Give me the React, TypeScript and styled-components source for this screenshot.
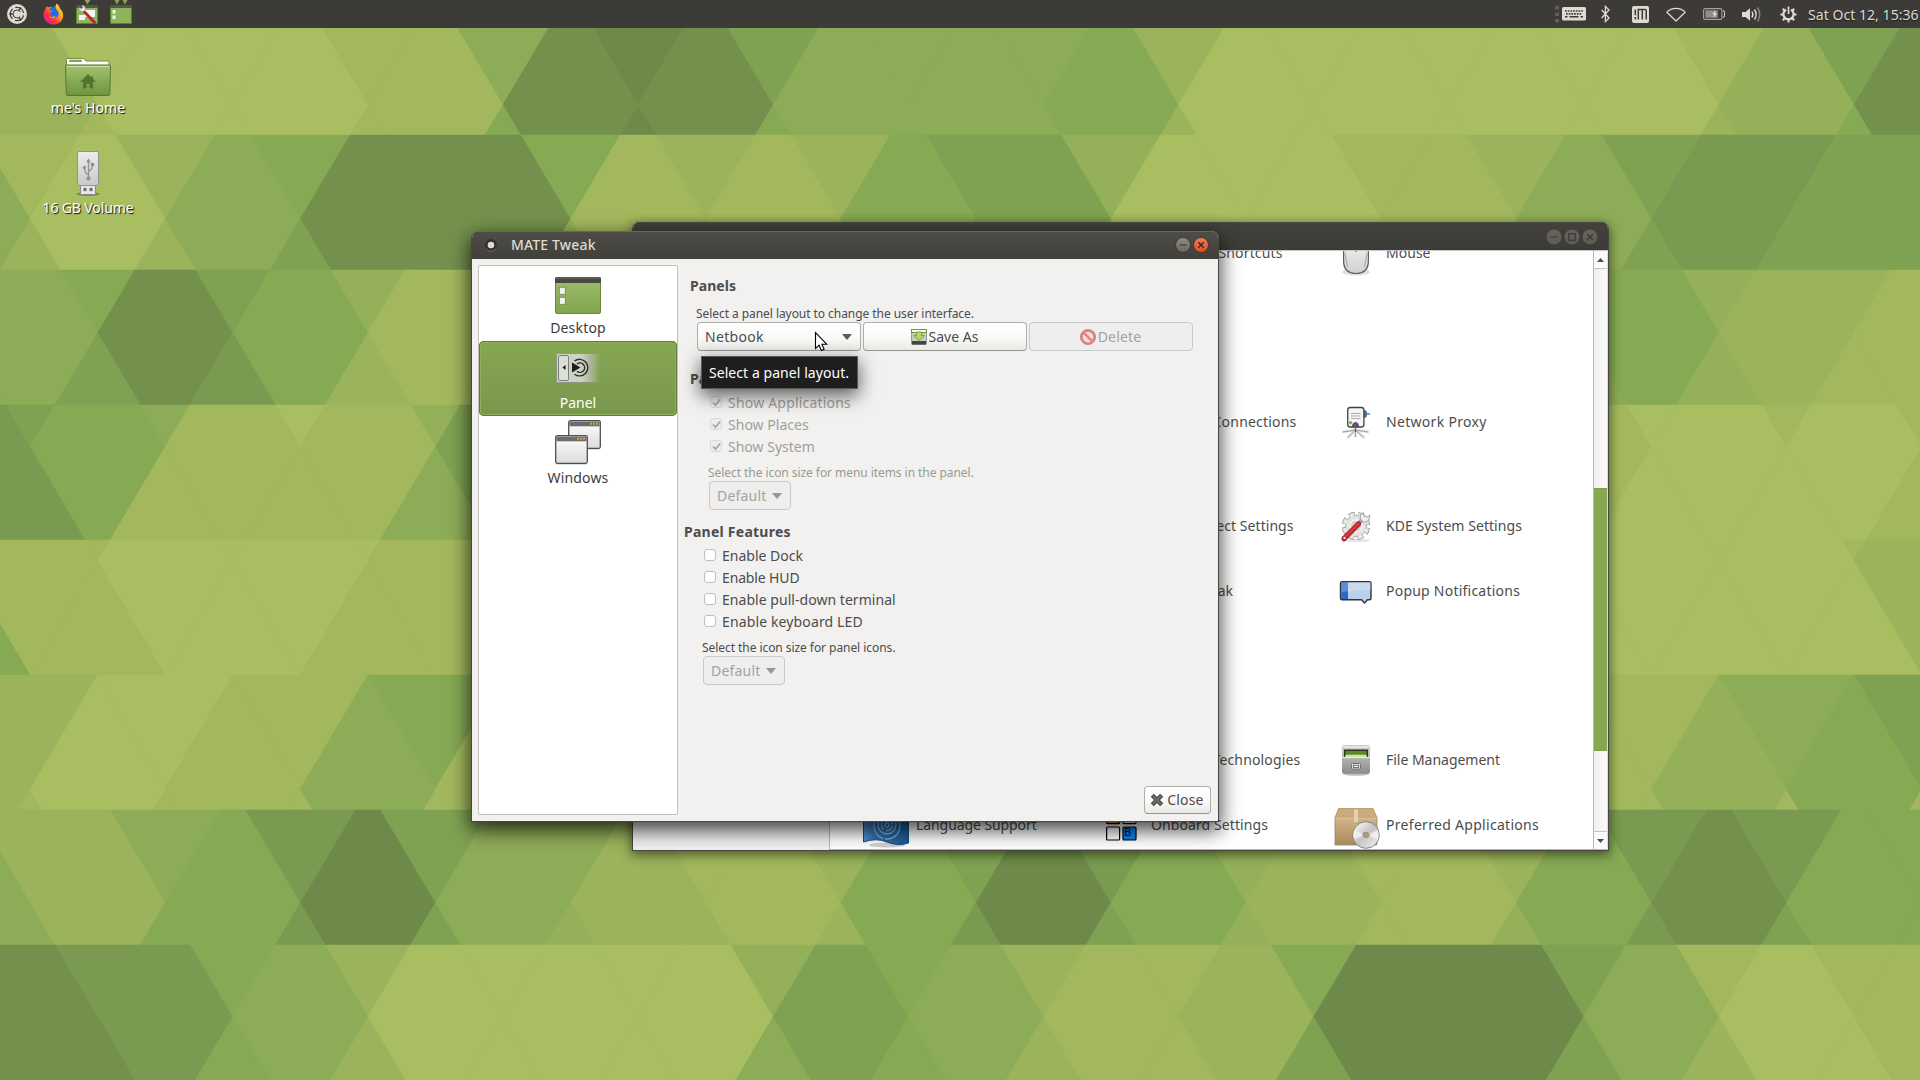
import React from 'react';
import styled, { createGlobalStyle, css } from 'styled-components';

const GlobalStyle = createGlobalStyle`
  * { box-sizing: border-box; }
  html, body { margin: 0; padding: 0; }
  body {
    width: 1920px;
    height: 1080px;
    overflow: hidden;
    background: #a3b75e;
    font-family: "Noto Sans", "Open Sans", sans-serif;
    font-size: 14px;
    line-height: 22px;
    color: #4c4c4c;
  }
  svg { display: block; flex: none; }
`;

/* ---------- wallpaper ---------- */

const PALETTE = [
  '#6d8a4a', '#73914d', '#799a50', '#7fa252', '#86a954',
  '#8dac57', '#94b059', '#9bb35b', '#a3b85d', '#a9be61',
];

/* Each band holds three rows of diamonds, one shade digit per diamond. */
const BANDS: string[][] = [
  ['7998503557999831', '799811554999961', '7898404557999741'],
  ['874147736987323', '5951188439985233', '773167736987333'],
  ['5436888888884678', '514888888888478', '5327888888885688'],
  ['359688888888988', '2488388888888998', '288588888888998'],
  ['8899888888888987', '899888888888997', '4898888888889997'],
  ['6987388888889743', '798488888888853', '7985888888888643'],
  ['752358732687224', '5740578404784144', '542367723686234'],
  ['1247996478403887', '125999358700598', '1147995478303797'],
];
const FIRST_ROW = [-1, 0, 1, 2, 3, 4, 6, 7];
const BAND_H = 135;
const HALF_H = 114;
const HALF_W = 67.55;

const cells: { points: string; color: string }[] = [];
BANDS.forEach((band, b) => {
  const top = b * BAND_H;
  const bottom = top + BAND_H;
  band.forEach((shades, r) => {
    const j = FIRST_ROW[b] + r;
    const cy = 105 + j * HALF_H;
    const x0 = shades.length === 16 ? -37.5 : 30;
    const y0 = Math.max(top, cy - HALF_H);
    const y1 = Math.min(bottom, cy + HALF_H);
    if (y1 <= y0) return;
    const half = (y: number) => ((HALF_H - Math.abs(y - cy)) / HALF_H) * HALF_W;
    const ys = cy > y0 && cy < y1 ? [y0, cy, y1] : [y0, y1];
    shades.split('').forEach((s, i) => {
      const cx = x0 + i * HALF_W * 2;
      const left = ys.map((y) => `${(cx - half(y)).toFixed(1)},${y}`);
      const right = ys.map((y) => `${(cx + half(y)).toFixed(1)},${y}`).reverse();
      cells.push({ points: [...left, ...right].join(' '), color: PALETTE[Number(s)] });
    });
  });
});

const WallpaperSvg = styled.svg`
  position: absolute;
  inset: 0;
`;

const Wallpaper = () => (
  <WallpaperSvg width="1920" height="1080" viewBox="0 0 1920 1080">
    {cells.map((c, i) => (
      <polygon key={i} points={c.points} fill={c.color} stroke={c.color} strokeWidth="0.5" />
    ))}
  </WallpaperSvg>
);

/* ---------- shell ---------- */

const Desktop = styled.main`
  position: relative;
  width: 1920px;
  height: 1080px;
  overflow: hidden;
`;

const TopPanel = styled.header`
  position: relative;
  display: flex;
  align-items: center;
  height: 28px;
  padding-left: 7px;
  background: #3c3b37;
`;

const Slot = styled.div<{ $ml?: number }>`
  flex: none;
  margin-left: ${(p) => p.$ml ?? 0}px;
`;

const Tray = styled.div`
  display: flex;
  align-items: center;
  height: 28px;
  margin-left: auto;
`;

const Clock = styled.time`
  margin-left: 11px;
  width: 112px;
  line-height: 27px;
  letter-spacing: 0.05px;
  white-space: nowrap;
  color: #dfdbd2;
  text-shadow: 0 1px 1px #1c1b19;
`;

const Shortcuts = styled.div`
  position: relative;
  display: flex;
  flex-direction: column;
  gap: 30px;
  width: 176px;
  padding-top: 21px;
`;

const Shortcut = styled.div`
  display: flex;
  flex-direction: column;
  align-items: center;
`;

const ShortcutLabel = styled.span<{ $ls: number }>`
  color: #fff;
  white-space: nowrap;
  letter-spacing: ${(p) => p.$ls}px;
  text-shadow: 1px 1px 1px rgba(0, 0, 0, 0.9);
`;

/* ---------- windows ---------- */

const Window = styled.section<{ $x: number; $y: number; $w: number; $h: number; $active?: boolean }>`
  position: absolute;
  left: ${(p) => p.$x}px;
  top: ${(p) => p.$y}px;
  width: ${(p) => p.$w}px;
  height: ${(p) => p.$h}px;
  display: flex;
  flex-direction: column;
  overflow: hidden;
  border-radius: 7px 7px 0 0;
  border: solid #484743;
  border-width: 0 1px 1px;
  background: #f2f1f0;
  box-shadow: ${(p) =>
    p.$active ? '0 7px 20px 1px rgba(0,0,0,0.75)' : '0 3px 11px 1px rgba(20,30,0,0.6)'};
`;

const TitleBar = styled.div<{ $active?: boolean }>`
  flex: none;
  display: flex;
  align-items: center;
  height: 28px;
  margin: 0 -1px;
  ${(p) =>
    p.$active
      ? css`
          padding: 0 10px 0 13px;
          background: linear-gradient(#4f4d47, #403f3a);
          box-shadow: inset 0 1px 0 #67665f;
          color: #dfdbd2;
        `
      : css`
          padding: 1px 11px 0 13px;
          background: linear-gradient(#42413c, #3c3b37);
          box-shadow: inset 0 1px 0 #4a4944;
          color: #7d7a73;
        `}
`;

const Title = styled.h1`
  flex: 1;
  margin: 0 0 0 13px;
  font-size: 14px;
  font-weight: 500;
  line-height: 28px;
  letter-spacing: 0.15px;
`;

const TitleButtons = styled.div`
  display: flex;
  gap: 2px;
`;

/* ---------- control center ---------- */

const CcBody = styled.div`
  flex: 1;
  min-height: 0;
  display: flex;
  border-right: 1px solid #dcdad7;
`;

const CcSide = styled.div`
  flex: none;
  width: 196px;
  background: #f2f1f0;
`;

const CcList = styled.div`
  flex: 1;
  overflow: hidden;
  background: #fff;
  border-left: 1px solid #b9b7b4;
  border-top: 1px solid #c8c6c3;
  border-bottom: 1px solid #b9b7b4;
`;

const CcScrolled = styled.div`
  margin-top: -31px;
  padding-left: 32px;
`;

const CcGroup = styled.div<{ $gap: number }>`
  display: grid;
  grid-template-columns: repeat(3, 235px);
  grid-auto-rows: 65px;
  margin-bottom: ${(p) => p.$gap}px;
`;

const CcItem = styled.div<{ $col: number }>`
  grid-column: ${(p) => p.$col};
  display: flex;
  align-items: center;
`;

const CcIcon = styled.div`
  flex: none;
  width: 48px;
  height: 48px;
  margin-right: 6px;
`;

const CcLabel = styled.span<{ $ls?: number }>`
  white-space: nowrap;
  letter-spacing: ${(p) => p.$ls ?? 0.1}px;
`;

const Scrollbar = styled.div`
  flex: none;
  display: flex;
  flex-direction: column;
  width: 14px;
  background: linear-gradient(90deg, #efeeed, #fbfafa);
  border-left: 1px solid #b9b7b4;
  border-top: 1px solid #c8c6c3;
  border-bottom: 1px solid #b9b7b4;
`;

const ScrollButton = styled.div<{ $down?: boolean }>`
  flex: none;
  display: flex;
  align-items: center;
  justify-content: center;
  height: 18px;
  background: #fbfafa;
  border: solid #c6c4c1;
  border-width: ${(p) => (p.$down ? '1px 0 0' : '0 0 1px')};
`;

const ScrollTrack = styled.div`
  flex: 1;
  padding-top: 219px;
`;

const ScrollThumb = styled.div`
  height: 263px;
  background: #87a752;
  border: 1px solid #7f9f4c;
  border-width: 1px 0;
`;

/* ---------- tweak window ---------- */

const TweakBody = styled.div`
  flex: 1;
  min-height: 0;
  display: flex;
  padding: 6px 7px 6px 6px;
`;

const CategoryList = styled.nav`
  flex: none;
  width: 200px;
  border: 1px solid #c3c1be;
  border-radius: 2px;
  background: #fff;
`;

const Category = styled.div<{ $selected?: boolean }>`
  display: flex;
  flex-direction: column;
  align-items: center;
  height: 75px;
  padding-top: 3px;
  border-radius: 5px;
  color: #3c3c3c;
  ${(p) =>
    p.$selected &&
    css`
      color: #fff;
      background: linear-gradient(#87a752, #78974e);
      box-shadow: inset 0 0 0 1px #5f7d38, inset 0 0 0 2px #8fb058;
    `}
`;

const CategoryLabel = styled.span<{ $ls: number }>`
  letter-spacing: ${(p) => p.$ls}px;
`;

const Settings = styled.div`
  flex: 1;
  display: flex;
  flex-direction: column;
  padding: 10px 0 0 6px;
`;

const Section = styled.div<{ $indent: number; $mt: number }>`
  margin: ${(p) => p.$mt}px 0 0 ${(p) => p.$indent}px;
`;

const Heading = styled.h2<{ $gap: number; $ls?: number }>`
  margin: 0 0 ${(p) => p.$gap}px;
  font-size: 14px;
  font-weight: 700;
  line-height: 22px;
  letter-spacing: ${(p) => p.$ls ?? 0.04}px;
`;

const Hint = styled.p<{ $indent: number; $mt?: number; $dim?: boolean }>`
  margin: ${(p) => p.$mt ?? 0}px 0 -2px ${(p) => p.$indent}px;
  font-size: 12px;
  line-height: 20px;
  letter-spacing: -0.06px;
  white-space: nowrap;
  color: ${(p) => (p.$dim ? '#979b92' : '#4c4c4c')};
`;

const Row = styled.div<{ $indent: number }>`
  display: flex;
  gap: 2px;
  margin-left: ${(p) => p.$indent}px;
`;

const Button = styled.div<{ $w: number; $h?: number; $dim?: boolean; $align?: string; $gap?: number; $ls?: number }>`
  display: flex;
  align-items: center;
  justify-content: ${(p) => p.$align ?? 'center'};
  gap: ${(p) => p.$gap ?? 2}px;
  width: ${(p) => p.$w}px;
  height: ${(p) => p.$h ?? 29}px;
  padding: 0 8px 0 7px;
  border: 1px solid ${(p) => (p.$dim ? '#c9c9ca' : '#b0aeab')};
  border-bottom-color: ${(p) => (p.$dim ? '#c9c9ca' : '#96948f')};
  border-radius: 4px;
  background: ${(p) => (p.$dim ? '#eeeeef' : 'linear-gradient(#fff, #f9f9f8 55%, #ebeae9)')};
  color: ${(p) => (p.$dim ? '#a5a29e' : '#4c4c4c')};
  letter-spacing: ${(p) => p.$ls ?? 0.15}px;
  white-space: nowrap;
`;

const CheckRow = styled.label<{ $indent: number; $dim?: boolean; $ls: number }>`
  display: flex;
  align-items: center;
  gap: 6px;
  height: 22px;
  margin-left: ${(p) => p.$indent}px;
  letter-spacing: ${(p) => p.$ls}px;
  color: ${(p) => (p.$dim ? '#9f9f9c' : '#4c4c4c')};
`;

const CheckBox = styled.span<{ $dim?: boolean }>`
  display: flex;
  align-items: center;
  justify-content: center;
  width: 12px;
  height: 12px;
  margin-bottom: 2px;
  border: 1px solid ${(p) => (p.$dim ? '#d9d8d7' : '#c0bebb')};
  border-radius: 3px;
  background: ${(p) => (p.$dim ? '#eeedec' : '#fff')};
`;

const Footer = styled.div`
  display: flex;
  justify-content: flex-end;
  margin-top: auto;
  padding-bottom: 1px;
`;

const Tooltip = styled.div`
  position: absolute;
  left: 701px;
  top: 356px;
  width: 157px;
  height: 33px;
  padding-left: 7px;
  border: 1px solid #5a5a50;
  background: #1e1e1e;
  color: #fff;
  line-height: 32px;
  letter-spacing: 0.06px;
  white-space: nowrap;
  box-shadow: 0 6px 18px 1px rgba(0, 0, 0, 0.6);
`;

const Pointer = styled.svg`
  position: absolute;
  left: 814px;
  top: 331px;
`;

/* ---------- icons ---------- */

const MateLogo = () => (
  <svg width="20" height="20" viewBox="0 0 20 20">
    <circle cx="10" cy="10" r="10" fill="#dfdbd2" />
    <g fill="none" stroke="#3c3b37" strokeWidth="1.2">
      <circle cx="10" cy="10" r="6.700" strokeDasharray="11 3.030" strokeDashoffset="-1.500" />
      <circle cx="10" cy="10" r="4" strokeWidth="1" strokeDasharray="20 5.130" strokeDashoffset="-2.500" />
    </g>
    <path d="M2.300 10h3.500M13.800 3.300l-1.700 3M13.800 16.700l-1.700-3" stroke="#3c3b37" strokeWidth="1.500" />
  </svg>
);

const Firefox = () => (
  <svg width="21" height="22" viewBox="0 0 21 22">
    <defs>
      <linearGradient id="fx" x1="0.9" y1="0.1" x2="0.15" y2="0.85">
        <stop offset="0" stopColor="#ffe226" />
        <stop offset="0.4" stopColor="#ff9a1a" />
        <stop offset="0.7" stopColor="#ff3a3c" />
        <stop offset="1" stopColor="#e0208a" />
      </linearGradient>
    </defs>
    <circle cx="10.5" cy="11" r="7.6" fill="#1f6fe0" />
    <path d="M13.6 0.6c2.6 2 3.2 4 3.4 5.2 2.6 2 3.6 5 3 8.2-.8 4.600-4.800 7.500-9.400 7.500C5 21.500.6 17.200.6 12c0-2.600.6-4.500 2-6.400L3.500 3l1.600 1.500c1-.5 2.300-.6 3.400-.3-1.500.8-2.200 2-2.300 3l2.700.5c.4.8-.4 1.600-1.700 2.100.2 3 2.200 5 4.700 4.800 3-.2 4.300-2.600 3.600-5.200-.4-1.500-1.300-2.200-2-3C12.200 4.800 12 2.800 13.600.6z" fill="url(#fx)" />
    <path d="M6.200 12.500c1 1.600 3.200 2 4.500.9.800-.6 1.500-.3 1.500.3-1 1.600-4.800 2-6-1.200z" fill="#ffb02a" />
  </svg>
);

const MiniDesktop = ({ tool }: { tool?: boolean }) => (
  <svg width="22" height="28" viewBox="0 0 22 28">
    {tool ? (
      <path d="M8.500 0h6l-3 4.500z" fill="#87a752" />
    ) : (
      <path d="M4.500 0h5L7 4.500zM12.500 0h5L15 4.500z" fill="#87a752" />
    )}
    <rect x="0.500" y="5.500" width="21" height="18" fill="#8fb35a" stroke="#5f7d38" />
    <rect x="0" y="5" width="22" height="3" fill="#55544f" />
    {tool ? (
      <>
        <rect x="8" y="10" width="11" height="7" fill="#f4f4f2" />
        <rect x="3" y="15" width="6" height="5" fill="#f4f4f2" />
        <path d="M8.500 12l10 10.500" stroke="#b8282c" strokeWidth="3" strokeLinecap="round" />
        <path d="M3 7.200c-.3 3 2 4.800 4.300 4.200l2-2c.4-2-.8-4-3.300-4l.8 2.400-1.500 1.300z" fill="#e8e8e6" stroke="#8a8a88" strokeWidth=".5" />
      </>
    ) : (
      <>
        <rect x="2.500" y="10" width="3" height="3.500" fill="#eef2e6" />
        <rect x="2.500" y="15.500" width="3" height="3.500" fill="#eef2e6" />
      </>
    )}
  </svg>
);

const FG = '#dfdbd2';

const TrayGrip = () => (
  <svg width="4" height="17" viewBox="0 0 4 17" fill="#5e5d58">
    <rect width="4" height="3.500" />
    <rect y="6.500" width="4" height="3.500" />
    <rect y="13" width="4" height="3.500" />
  </svg>
);

const TrayKeyboard = () => (
  <svg width="24" height="14" viewBox="0 0 24 14">
    <rect width="24" height="13.600" rx="1.500" fill={FG} />
    <g stroke="#3c3b37" strokeWidth="1.600">
      <path d="M3 4h18" strokeDasharray="1.700 1" />
      <path d="M4 6.900h16" strokeDasharray="1.700 1" />
      <path d="M3 9.800h2.500M7.500 9.800h9M18.500 9.800H21" />
    </g>
  </svg>
);

const TrayBluetooth = () => (
  <svg width="9" height="18" viewBox="0 0 9 18">
    <path d="M.7 5l7.300 8-3.600 3.600V1.400L8 5 .7 13" fill="none" stroke={FG} strokeWidth="1.300" />
  </svg>
);

const TrayM = () => (
  <svg width="17" height="17" viewBox="0 0 17 17">
    <rect width="17" height="17" rx="2" fill={FG} />
    <path d="M3.300 3.500v5.700M3.300 11v2.500M6.300 13.500V3.500h6.900a1 1 0 0 1 1 1v9M10.300 4v9.500" fill="none" stroke="#3c3b37" strokeWidth="1.500" />
  </svg>
);

const TrayWifi = () => (
  <svg width="20" height="15" viewBox="0 0 20 15">
    <path d="M.9 5.200C5.500.200 14.500.200 19.100 5.200L10 14z" fill="none" stroke={FG} strokeWidth="1.200" strokeLinejoin="round" />
  </svg>
);

const TrayBattery = () => (
  <svg width="22" height="12" viewBox="0 0 22 12">
    <rect x=".6" y=".6" width="18.300" height="10.800" rx="1.500" fill="none" stroke="#a3a099" strokeWidth="1.100" />
    <path d="M20 2.500q1.500 0 1.500 2v3q0 2-1.500 2" fill="none" stroke={FG} strokeWidth="1" />
    <rect x="2.300" y="2.300" width="12.500" height="7.400" fill="#918e87" />
    <path d="M12.500 2L9.500 6.300h2L10.300 10l3.700-4.600h-2.200z" fill="#f2efe8" />
  </svg>
);

const TrayVolume = () => (
  <svg width="20" height="17" viewBox="0 0 20 17" fill="none">
    <path d="M0 6h3.500L8 2.200v12.600L3.500 11H0z" fill={FG} />
    <path d="M10 5.500q1.800 3 0 6M12.500 3.500q3.300 5 0 10" stroke={FG} strokeWidth="1.400" />
    <path d="M15.500 1.500q4.500 7 0 14" stroke="#8a8780" strokeWidth="1.400" />
  </svg>
);

const TrayGear = () => (
  <svg width="17" height="17" viewBox="0 0 17 17" fill="none" stroke={FG}>
    <path d="M6 3.800A5.100 5.100 0 1 0 11 3.800" strokeWidth="2.200" />
    <path d="M8.500 .5v7.500" strokeWidth="1.700" />
    <path d="M8.500 14v2.500M.5 8.500h3M13.500 8.500h3M2.800 2.800l2 2M14.200 2.800l-2 2M2.800 14.200l2-2M14.200 14.200l-2-2" strokeWidth="2" />
  </svg>
);

const FolderHome = () => (
  <svg width="48" height="48" viewBox="0 0 48 48">
    <defs>
      <linearGradient id="fold" x1="0" y1="0" x2="0" y2="1">
        <stop offset="0" stopColor="#a3c26e" />
        <stop offset="1" stopColor="#6f9440" />
      </linearGradient>
    </defs>
    <path d="M2.500 17V10.500q0-1 1-1h16l2.500 2.500h23v6z" fill="#fbfbfa" stroke="#74904a" />
    <rect x="5" y="10.800" width="13" height="2.200" rx="1" fill="#86a752" />
    <path d="M1.500 17q0-1 1-1h43q1 0 1 1l-.7 28q0 1.500-1.300 1.500H3.600q-1.300 0-1.300-1.500z" fill="url(#fold)" stroke="#58762f" />
    <path d="M2.700 17.500h42.600" stroke="#c9dba8" />
    <path d="M24 25l-8 8h3v6.500h3.500V35h3v4.500H29V33h3l-3-3v-3h-1.500v1.500z" fill="#557330" />
  </svg>
);

const UsbStick = () => (
  <svg width="48" height="48" viewBox="0 0 48 48">
    <ellipse cx="24" cy="45" rx="12" ry="2" fill="rgba(50,60,20,.35)" />
    <defs>
      <linearGradient id="usb" x1="0" y1="0" x2="0" y2="1">
        <stop offset="0" stopColor="#ededee" />
        <stop offset="1" stopColor="#c9c9ca" />
      </linearGradient>
    </defs>
    <rect x="16.500" y="36" width="15" height="9.500" rx="1" fill="#e8e8e8" stroke="#8b8b8d" />
    <rect x="13.500" y="2.500" width="21" height="34" rx="1.500" fill="url(#usb)" stroke="#929295" />
    <rect x="19.500" y="39" width="3" height="3" fill="#666" stroke="#aaa" strokeWidth=".6" />
    <rect x="25.500" y="39" width="3" height="3" fill="#666" stroke="#aaa" strokeWidth=".6" />
    <g stroke="#929295" strokeWidth="1.300" fill="none">
      <path d="M24.500 29V12M24.500 26q-4-2-4-7M24.500 22.500q4-2 4-6.500" />
      <circle cx="24.500" cy="29.500" r="1.500" fill="#929295" />
      <circle cx="20.500" cy="18.500" r="1" fill="#929295" />
      <rect x="27.500" y="14.500" width="2" height="2" fill="#929295" />
      <path d="M23.300 12.500l1.200-2 1.200 2z" fill="#929295" />
    </g>
  </svg>
);

const WinMenuDot = () => (
  <svg width="14" height="14" viewBox="0 0 14 14">
    <circle cx="7" cy="7" r="6" fill="#33322e" />
    <path d="M2 10.500a6 6 0 0 0 10 0" fill="none" stroke="#6a6962" strokeWidth="1" />
    <circle cx="7" cy="7" r="3.300" fill="#dfdbd2" />
  </svg>
);

type WBtn = { kind: 'min' | 'max' | 'close'; active?: boolean };
const WinButton = ({ kind, active }: WBtn) => (
  <svg width="16" height="16" viewBox="0 0 16 16">
    <defs>
      <linearGradient id={`wb-${kind}-${active ? 1 : 0}`} x1="0" y1="0" x2="0" y2="1">
        <stop offset="0" stopColor={!active ? '#66635d' : kind === 'close' ? '#f47d56' : '#8f8c82'} />
        <stop offset="1" stopColor={!active ? '#5e5b55' : kind === 'close' ? '#e2491f' : '#6a675f'} />
      </linearGradient>
    </defs>
    <circle cx="8" cy="8" r="7.500" fill={`url(#wb-${kind}-${active ? 1 : 0})`} stroke={active ? '#33322e' : 'none'} strokeWidth=".8" />
    <g fill="none" stroke={active ? '#33302b' : '#3a3934'} strokeWidth="1.200">
      {kind === 'min' && <path d="M4.500 8h7" />}
      {kind === 'max' && <rect x="4.700" y="4.700" width="6.500" height="6.500" />}
      {kind === 'close' && <path d="M5.300 5.300l5.400 5.400M10.700 5.300l-5.400 5.400" strokeWidth="1.500" />}
    </g>
  </svg>
);

const CatDesktop = () => (
  <svg width="48" height="48" viewBox="0 0 48 48">
    <defs>
      <linearGradient id="cd" x1="0" y1="0" x2="0" y2="1">
        <stop offset="0" stopColor="#9dbf6c" />
        <stop offset="1" stopColor="#82a44c" />
      </linearGradient>
    </defs>
    <rect x="1.500" y="8.500" width="45" height="36" rx="1.500" fill="url(#cd)" stroke="#69863f" />
    <path d="M1 10q0-2 1.500-2h43q1.500 0 1.500 2v4H1z" fill="#474743" />
    <path d="M2 9h44" stroke="#74746e" />
    <g fill="#f2f2f2" stroke="#fff" strokeWidth=".8">
      <rect x="5.300" y="18.300" width="6" height="7" stroke="#6f8c45" />
      <rect x="5.300" y="28.300" width="6" height="7" stroke="#6f8c45" />
    </g>
  </svg>
);

const CatPanel = () => (
  <svg width="48" height="48" viewBox="0 0 48 48">
    <defs>
      <linearGradient id="cp" x1="0" y1="0" x2="1" y2="0">
        <stop offset="0.550" stopColor="#ced3c8" />
        <stop offset="1" stopColor="#ced3c8" stopOpacity="0" />
      </linearGradient>
      <linearGradient id="cpb" x1="0" y1="0" x2="1" y2="0">
        <stop offset="0.450" stopColor="#8f978a" />
        <stop offset="1" stopColor="#8f978a" stopOpacity="0" />
      </linearGradient>
    </defs>
    <rect x="2" y="9" width="44" height="30" fill="url(#cpb)" />
    <rect x="3" y="10" width="43" height="28" fill="url(#cp)" />
    <rect x="4.500" y="11.500" width="10" height="25" rx="1.500" fill="#dcdfd8" stroke="#7c8078" />
    <path d="M11.500 21v5l-3-2.500z" fill="#111" />
    <g fill="none" stroke="#2b2d2a" strokeWidth="1.400">
      <path d="M20.500 17A8.300 8.300 0 1 1 20.500 30.200" />
      <path d="M23 20A4.700 4.700 0 1 1 23 27.400" />
    </g>
    <path d="M18 18.500v10l8.500-5z" fill="#1d1f1c" />
  </svg>
);

const MiniWindow = ({ x, y }: { x: number; y: number }) => (
  <g transform={`translate(${x} ${y})`}>
    <rect x="1" y="28" width="31" height="2" fill="rgba(0,0,0,.12)" />
    <rect x=".7" y=".7" width="31.600" height="27.600" rx="1.500" fill="url(#mw)" stroke="#4e4e4e" strokeWidth="1.300" />
    <path d="M1.500 1.500h30v4.800h-30z" fill="#6c6c6c" />
    <path d="M22 3.700h8.500" stroke="#d2a53c" strokeWidth="2" strokeDasharray="2 1" />
  </g>
);

const CatWindows = () => (
  <svg width="48" height="48" viewBox="0 0 48 48">
    <defs>
      <linearGradient id="mw" x1="0" y1="0" x2="0" y2="1">
        <stop offset="0.200" stopColor="#f7f7f7" />
        <stop offset="1" stopColor="#dcdcdc" />
      </linearGradient>
    </defs>
    <MiniWindow x={14} y={1} />
    <MiniWindow x={1} y={16} />
  </svg>
);

const SaveIcon = () => (
  <svg width="16" height="16" viewBox="0 0 16 16">
    <rect x=".5" y="1" width="15" height="14.500" rx="1" fill="#c9cbc7" stroke="#85877f" strokeWidth=".8" />
    <rect x="1" y="12" width="14" height="3.500" fill="#45463f" />
    <rect x=".5" y=".5" width="15" height="3" fill="#fff" stroke="#6b9c2d" />
    <path d="M5.500 3h5v3.500h2.800L8 11.500 2.700 6.500h2.800z" fill="#b5d867" stroke="#6b9c2d" strokeWidth=".9" />
  </svg>
);

const DeleteIcon = () => (
  <svg width="16" height="16" viewBox="0 0 16 16">
    <circle cx="8" cy="8" r="6.500" fill="#f6dedd" stroke="#de8582" strokeWidth="2.600" />
    <circle cx="8" cy="8" r="7.600" fill="none" stroke="#c87a83" strokeWidth=".6" />
    <path d="M3.800 3.800l8.400 8.400" stroke="#dc8886" strokeWidth="2.600" />
  </svg>
);

const CloseIcon = () => (
  <svg width="14" height="14" viewBox="0 0 14 14">
    <path d="M2.300 2.300l9.400 9.400M11.700 2.300l-9.400 9.400" stroke="#4b4b49" strokeWidth="4.400" />
    <path d="M3 3l8 8M11 3l-8 8" stroke="#6f6f6c" strokeWidth="2" />
  </svg>
);

const Caret = ({ color = '#5a5a5a' }: { color?: string }) => (
  <svg width="10" height="6" viewBox="0 0 10 6">
    <path d="M0 0h10L5 6z" fill={color} />
  </svg>
);

const Tick = () => (
  <svg width="9" height="9" viewBox="0 0 9 9">
    <path d="M1 4.500l2.500 2.700L8 1.500" fill="none" stroke="#a7a6a4" strokeWidth="1.800" />
  </svg>
);

const ScrollArrow = ({ down }: { down?: boolean }) => (
  <svg width="7" height="4" viewBox="0 0 7 4">
    <path d={down ? 'M0 0h7L3.500 4z' : 'M0 4h7L3.500 0z'} fill="#4c4c4c" />
  </svg>
);

const MouseIcon = () => (
  <svg width="48" height="48" viewBox="0 0 48 48">
    <defs>
      <linearGradient id="ms" x1="0" y1="0" x2="0" y2="1">
        <stop offset="0" stopColor="#fafafa" />
        <stop offset="1" stopColor="#d0d0d0" />
      </linearGradient>
    </defs>
    <ellipse cx="24" cy="43" rx="14" ry="3.500" fill="rgba(0,0,0,.12)" />
    <path d="M12 14q0-10 12-10t12 10q.6 12 .3 20-.8 10.500-12.300 10.500T11.700 34Q11.400 26 12 14z" fill="url(#ms)" stroke="#5b5b5b" strokeWidth="1.200" />
    <path d="M24 10v13" stroke="#333" strokeWidth="1" />
    <path d="M13 24l2.500 14M35 24l-2.500 14" stroke="#a0a0a0" strokeWidth=".9" fill="none" />
  </svg>
);

const ProxyIcon = () => (
  <svg width="48" height="48" viewBox="0 0 48 48">
    <g stroke="#dededc" strokeWidth="2.600">
      <path d="M23.500 32L10 34M23.500 32l-8 8M23.500 31v8M23.500 32l9 8M23.500 32L37 34" />
    </g>
    <g stroke="#8a8a8a" strokeWidth=".7">
      <path d="M23.500 32L11 34M23.500 32l-7.500 7.500M23.500 31v8M23.500 32l8 7.500M23.500 32L36 34" />
    </g>
    <path d="M33 16h5" stroke="#999" strokeWidth="2" />
    <path d="M32 12v8l2.500-1.500v-5z" fill="#3f7cc0" stroke="#2a5a94" strokeWidth=".7" />
    <rect x="15.700" y="9.500" width="16.200" height="19.500" rx="2.500" fill="#f6f6f4" stroke="#3f433f" strokeWidth="1.300" />
    <path d="M19 15.500h9.500M19 18h9.500M19 20.500h9.500" stroke="#9a9a98" strokeWidth=".8" />
    <circle cx="18.500" cy="24.700" r="1.600" fill="#73c21d" />
    <path d="M20.500 28.500q0-4 3-4t3 4z" fill="#75507b" stroke="#4c3352" strokeWidth=".8" />
    <path d="M23.500 27v7" stroke="#666" strokeWidth="1.400" />
  </svg>
);

const GearWrench = () => (
  <svg width="48" height="48" viewBox="0 0 48 48">
    <ellipse cx="25" cy="38.500" rx="13" ry="1.800" fill="rgba(0,0,0,.1)" />
    <circle cx="24" cy="24" r="12" fill="none" stroke="#9b9b98" strokeWidth="4.600" strokeDasharray="5.900 3.525" transform="rotate(9 24 24)" />
    <circle cx="24" cy="24" r="10.600" fill="#e3e3e1" stroke="#9b9b98" strokeWidth=".8" />
    <circle cx="24" cy="24" r="11.600" fill="none" stroke="#e8e8e6" strokeWidth="3.600" strokeDasharray="4.600 4.511" strokeDashoffset="-.5" transform="rotate(9 24 24)" />
    <circle cx="24" cy="24" r="6" fill="#d3d3d1" stroke="#f5f5f3" strokeWidth="1.300" />
    <path d="M25.500 22.500l5-5" stroke="#a8a8a6" strokeWidth="4" />
    <path d="M29 18.500q-2.600-5 2.300-8l.8 3.500 3 1 2.500-1.800q.8 6.300-5.300 7z" fill="#efefed" stroke="#8a8a88" strokeWidth=".8" />
    <path d="M12 36.700L26.500 22" stroke="#9b1a20" strokeWidth="5.200" strokeLinecap="round" />
    <path d="M12 36.400L26.300 22" stroke="#d8353a" strokeWidth="3.400" strokeLinecap="round" />
    <circle cx="12.500" cy="36" r="1.100" fill="#fff" />
  </svg>
);

const PopupIcon = () => (
  <svg width="48" height="48" viewBox="0 0 48 48">
    <path d="M10 14.700h27.500q1.500 0 1.500 1.500v15q0 1.500-1.500 1.500H35.500L32.500 36l-3-3.300H10q-1.500 0-1.500-1.500v-15q0-1.500 1.500-1.500z" fill="#b9cfea" stroke="#2c3540" strokeWidth="1.400" />
    <path d="M16 15.500h22.300v7.500Q25 22 16 26z" fill="#c9daf0" />
    <path d="M9.200 15.500H16V32H9.200z" fill="#2f68c4" />
    <path d="M9.200 15.500H16V24l-6.800 1.500z" fill="#5f8cd8" />
  </svg>
);

const CabinetIcon = () => (
  <svg width="48" height="48" viewBox="0 0 48 48">
    <defs>
      <linearGradient id="cab" x1="0" y1="0" x2="0" y2="1">
        <stop offset="0" stopColor="#c9c9c9" />
        <stop offset="1" stopColor="#8c8c8c" />
      </linearGradient>
    </defs>
    <ellipse cx="24" cy="38" rx="13" ry="1.800" fill="rgba(0,0,0,.25)" />
    <path d="M11.500 9.500h25l1.300 3H10.200z" fill="#e6e6e6" stroke="#b0b0b0" strokeWidth=".6" />
    <path d="M10 12h28v24q0 1.700-1.700 1.700H11.700Q10 37.700 10 36z" fill="url(#cab)" />
    <rect x="12" y="13.500" width="24" height="8" fill="#2a3a18" />
    <path d="M13.500 15h21v6h-21z" fill="#5f8a28" />
    <path d="M13.500 18.700h21v2.300h-21z" fill="#cfe4a6" />
    <path d="M10 21.500h28" stroke="#e9e9e9" strokeWidth="1.300" />
    <rect x="19.500" y="27.500" width="9" height="5.500" rx="1" fill="#eee" stroke="#6f6f6f" />
    <rect x="21.300" y="29.200" width="5.500" height="2.300" fill="#fff" stroke="#333" strokeWidth=".7" />
  </svg>
);

const PackageIcon = () => (
  <svg width="48" height="48" viewBox="0 0 48 48">
    <defs>
      <linearGradient id="pk" x1="0" y1="0" x2="0" y2="1">
        <stop offset="0" stopColor="#d1b488" />
        <stop offset="1" stopColor="#a98a5b" />
      </linearGradient>
      <linearGradient id="disc" x1="0" y1="0" x2="1" y2="1">
        <stop offset="0" stopColor="#fff" />
        <stop offset="0.500" stopColor="#c4c4c4" />
        <stop offset="1" stopColor="#f6f6f6" />
      </linearGradient>
    </defs>
    <path d="M2.500 43.500h42" stroke="rgba(0,0,0,.2)" strokeWidth="3" />
    <path d="M6.500 7.500h34.500l4 9H3z" fill="#cbaa7c" stroke="#a9895b" strokeWidth=".7" />
    <path d="M3 16.500h42V43.500H3z" fill="url(#pk)" stroke="#9b7c4e" strokeWidth=".7" />
    <path d="M3.500 17h41" stroke="#e2cda9" />
    <path d="M22 8.500h4V21h-4z" fill="#e4d2b3" />
    <circle cx="34" cy="34" r="13.300" fill="url(#disc)" stroke="#7d7d7d" strokeWidth=".9" />
    <path d="M34 34L22 29.500a13 13 0 0 0 0 8.500zM34 34l12-4.500a13 13 0 0 1 0 8.500z" fill="rgba(255,255,255,.6)" />
    <circle cx="34" cy="34" r="4.600" fill="#cfcfcf" />
    <circle cx="34" cy="34" r="2.900" fill="#b4996b" stroke="#8d8d8d" strokeWidth=".8" />
  </svg>
);

const LanguageIcon = () => (
  <svg width="48" height="48" viewBox="0 0 48 48">
    <defs>
      <linearGradient id="lg" x1="0" y1="0" x2="1" y2="0">
        <stop offset="0" stopColor="#5590cf" />
        <stop offset="0.300" stopColor="#2f6ead" />
        <stop offset="1" stopColor="#1c5b95" />
      </linearGradient>
    </defs>
    <ellipse cx="25" cy="44" rx="18" ry="2.500" fill="rgba(0,0,0,.18)" />
    <path d="M1.500 8Q12 3 24 8t22.500 1v33Q36 45.500 25 41T1.500 41z" fill="url(#lg)" stroke="#17497c" />
    <g fill="none" stroke="#7fadd8" strokeWidth="1.400">
      <circle cx="25" cy="25" r="13" strokeDasharray="36 7" transform="rotate(108 25 25)" />
      <circle cx="25" cy="24" r="9" />
      <circle cx="25" cy="24" r="5.500" strokeDasharray="9 3" />
      <circle cx="25" cy="24" r="2" />
    </g>
  </svg>
);

const Key = styled.text`
  font: 10px "Liberation Sans", sans-serif;
`;

const OnboardIcon = () => (
  <svg width="48" height="48" viewBox="0 0 48 48">
    <g stroke="#000" strokeWidth="1.200">
      <rect x="9.600" y="9.600" width="13" height="13" rx="1" fill="#d9ad2e" />
      <rect x="26" y="9.600" width="13" height="13" rx="1" fill="#fff" />
      <rect x="9.600" y="26" width="13" height="13" rx="1" fill="#fff" />
      <rect x="26" y="26" width="13" height="13" rx="1" fill="#0d84f0" />
    </g>
    <Key x="27.500" y="34.500">B</Key>
  </svg>
);

const PlainIcon = () => (
  <svg width="48" height="48" viewBox="0 0 48 48">
    <rect x="8" y="10" width="32" height="28" rx="3" fill="#d8d8d6" stroke="#8a8a88" />
  </svg>
);

/* ---------- content ---------- */

type Entry = { col: number; label: string; ls?: number; Icon: () => React.JSX.Element };
const GROUPS: { gap: number; items: Entry[] }[] = [
  {
    gap: 104,
    items: [
      { col: 2, label: 'Keyboard Shortcuts', ls: 0.15, Icon: PlainIcon },
      { col: 3, label: 'Mouse', ls: 0.02, Icon: MouseIcon },
    ],
  },
  {
    gap: 39,
    items: [
      { col: 2, label: 'Network Connections', ls: 0.2, Icon: PlainIcon },
      { col: 3, label: 'Network Proxy', ls: 0.31, Icon: ProxyIcon },
    ],
  },
  {
    gap: 104,
    items: [
      { col: 2, label: 'KDE Connect Settings', ls: 0.05, Icon: PlainIcon },
      { col: 3, label: 'KDE System Settings', ls: 0.06, Icon: GearWrench },
      { col: 2, label: 'MATE Tweak', ls: 0.05, Icon: PlainIcon },
      { col: 3, label: 'Popup Notifications', ls: 0.23, Icon: PopupIcon },
    ],
  },
  {
    gap: 0,
    items: [
      { col: 2, label: 'Assistive Technologies', ls: 0.15, Icon: PlainIcon },
      { col: 3, label: 'File Management', ls: -0.02, Icon: CabinetIcon },
      { col: 1, label: 'Language Support', ls: -0.08, Icon: LanguageIcon },
      { col: 2, label: 'Onboard Settings', ls: 0.09, Icon: OnboardIcon },
      { col: 3, label: 'Preferred Applications', ls: 0.3, Icon: PackageIcon },
    ],
  },
];

const ControlCenter = () => (
  <Window $x={632} $y={222} $w={977} $h={629}>
    <TitleBar>
      <WinMenuDot />
      <Title>Control Center</Title>
      <TitleButtons>
        <WinButton kind="min" />
        <WinButton kind="max" />
        <WinButton kind="close" />
      </TitleButtons>
    </TitleBar>
    <CcBody>
      <CcSide />
      <CcList>
        <CcScrolled>
          {GROUPS.map((g, i) => (
            <CcGroup key={i} $gap={g.gap}>
              {g.items.map(({ col, label, ls, Icon }) => (
                <CcItem key={label} $col={col}>
                  <CcIcon><Icon /></CcIcon>
                  <CcLabel $ls={ls}>{label}</CcLabel>
                </CcItem>
              ))}
            </CcGroup>
          ))}
        </CcScrolled>
      </CcList>
      <Scrollbar>
        <ScrollButton><ScrollArrow /></ScrollButton>
        <ScrollTrack><ScrollThumb /></ScrollTrack>
        <ScrollButton $down><ScrollArrow down /></ScrollButton>
      </Scrollbar>
    </CcBody>
  </Window>
);

const MateTweak = () => (
  <Window $x={471} $y={231} $w={748} $h={591} $active>
    <TitleBar $active>
      <WinMenuDot />
      <Title>MATE Tweak</Title>
      <TitleButtons>
        <WinButton kind="min" active />
        <WinButton kind="close" active />
      </TitleButtons>
    </TitleBar>
    <TweakBody>
      <CategoryList>
        <Category><CatDesktop /><CategoryLabel $ls={0.18}>Desktop</CategoryLabel></Category>
        <Category $selected><CatPanel /><CategoryLabel $ls={0}>Panel</CategoryLabel></Category>
        <Category><CatWindows /><CategoryLabel $ls={0.17}>Windows</CategoryLabel></Category>
      </CategoryList>
      <Settings>
        <Section $indent={6} $mt={0}>
          <Heading $gap={7}>Panels</Heading>
          <Hint $indent={6}>Select a panel layout to change the user interface.</Hint>
          <Row $indent={7}>
            <Button $w={164} $align="space-between" $ls={0.3}>Netbook<Caret /></Button>
            <Button $w={164} $ls={0.02}><SaveIcon />Save As</Button>
            <Button $w={164} $dim><DeleteIcon />Delete</Button>
          </Row>
        </Section>
        <Section $indent={6} $mt={17}>
          <Heading $gap={2}>Panel Menu Features</Heading>
          <CheckRow $indent={20} $dim $ls={0.2}><CheckBox $dim><Tick /></CheckBox>Show Applications</CheckRow>
          <CheckRow $indent={20} $dim $ls={0.02}><CheckBox $dim><Tick /></CheckBox>Show Places</CheckRow>
          <CheckRow $indent={20} $dim $ls={0.01}><CheckBox $dim><Tick /></CheckBox>Show System</CheckRow>
          <Hint $indent={18} $mt={5} $dim>Select the icon size for menu items in the panel.</Hint>
          <Row $indent={19}>
            <Button $w={82} $dim $align="space-between" $ls={0.2}>Default<Caret color="#999791" /></Button>
          </Row>
        </Section>
        <Section $indent={0} $mt={11}>
          <Heading $gap={2} $ls={0.25}>Panel Features</Heading>
          <CheckRow $indent={20} $ls={0.01}><CheckBox />Enable Dock</CheckRow>
          <CheckRow $indent={20} $ls={-0.14}><CheckBox />Enable HUD</CheckRow>
          <CheckRow $indent={20} $ls={0.04}><CheckBox />Enable pull-down terminal</CheckRow>
          <CheckRow $indent={20} $ls={0.13}><CheckBox />Enable keyboard LED</CheckRow>
          <Hint $indent={18} $mt={5}>Select the icon size for panel icons.</Hint>
          <Row $indent={19}>
            <Button $w={82} $dim $align="space-between" $ls={0.2}>Default<Caret color="#999791" /></Button>
          </Row>
        </Section>
        <Footer>
          <Button $w={67} $h={28} $gap={3}><CloseIcon />Close</Button>
        </Footer>
      </Settings>
    </TweakBody>
  </Window>
);

export default function App() {
  return (
    <>
      <GlobalStyle />
      <Desktop>
        <Wallpaper />
        <TopPanel>
          <Slot><MateLogo /></Slot>
          <Slot $ml={16}><Firefox /></Slot>
          <Slot $ml={12}><MiniDesktop tool /></Slot>
          <Slot $ml={12}><MiniDesktop /></Slot>
          <Tray>
            <Slot><TrayGrip /></Slot>
            <Slot $ml={3}><TrayKeyboard /></Slot>
            <Slot $ml={15}><TrayBluetooth /></Slot>
            <Slot $ml={22}><TrayM /></Slot>
            <Slot $ml={17}><TrayWifi /></Slot>
            <Slot $ml={17}><TrayBattery /></Slot>
            <Slot $ml={17}><TrayVolume /></Slot>
            <Slot $ml={18}><TrayGear /></Slot>
            <Clock>Sat Oct 12, 15:36</Clock>
          </Tray>
        </TopPanel>
        <Shortcuts>
          <Shortcut><FolderHome /><ShortcutLabel $ls={0.08}>me's Home</ShortcutLabel></Shortcut>
          <Shortcut><UsbStick /><ShortcutLabel $ls={-0.12}>16 GB Volume</ShortcutLabel></Shortcut>
        </Shortcuts>
        <ControlCenter />
        <MateTweak />
        <Tooltip>Select a panel layout.</Tooltip>
        <Pointer width="14" height="21" viewBox="0 0 14 21">
          <path d="M1.500 1.500v16l3.600-3.300 2.300 5.300 2.700-1.200-2.200-5.100h4.800z" fill="#fff" stroke="#000" strokeWidth="1.100" />
        </Pointer>
      </Desktop>
    </>
  );
}
